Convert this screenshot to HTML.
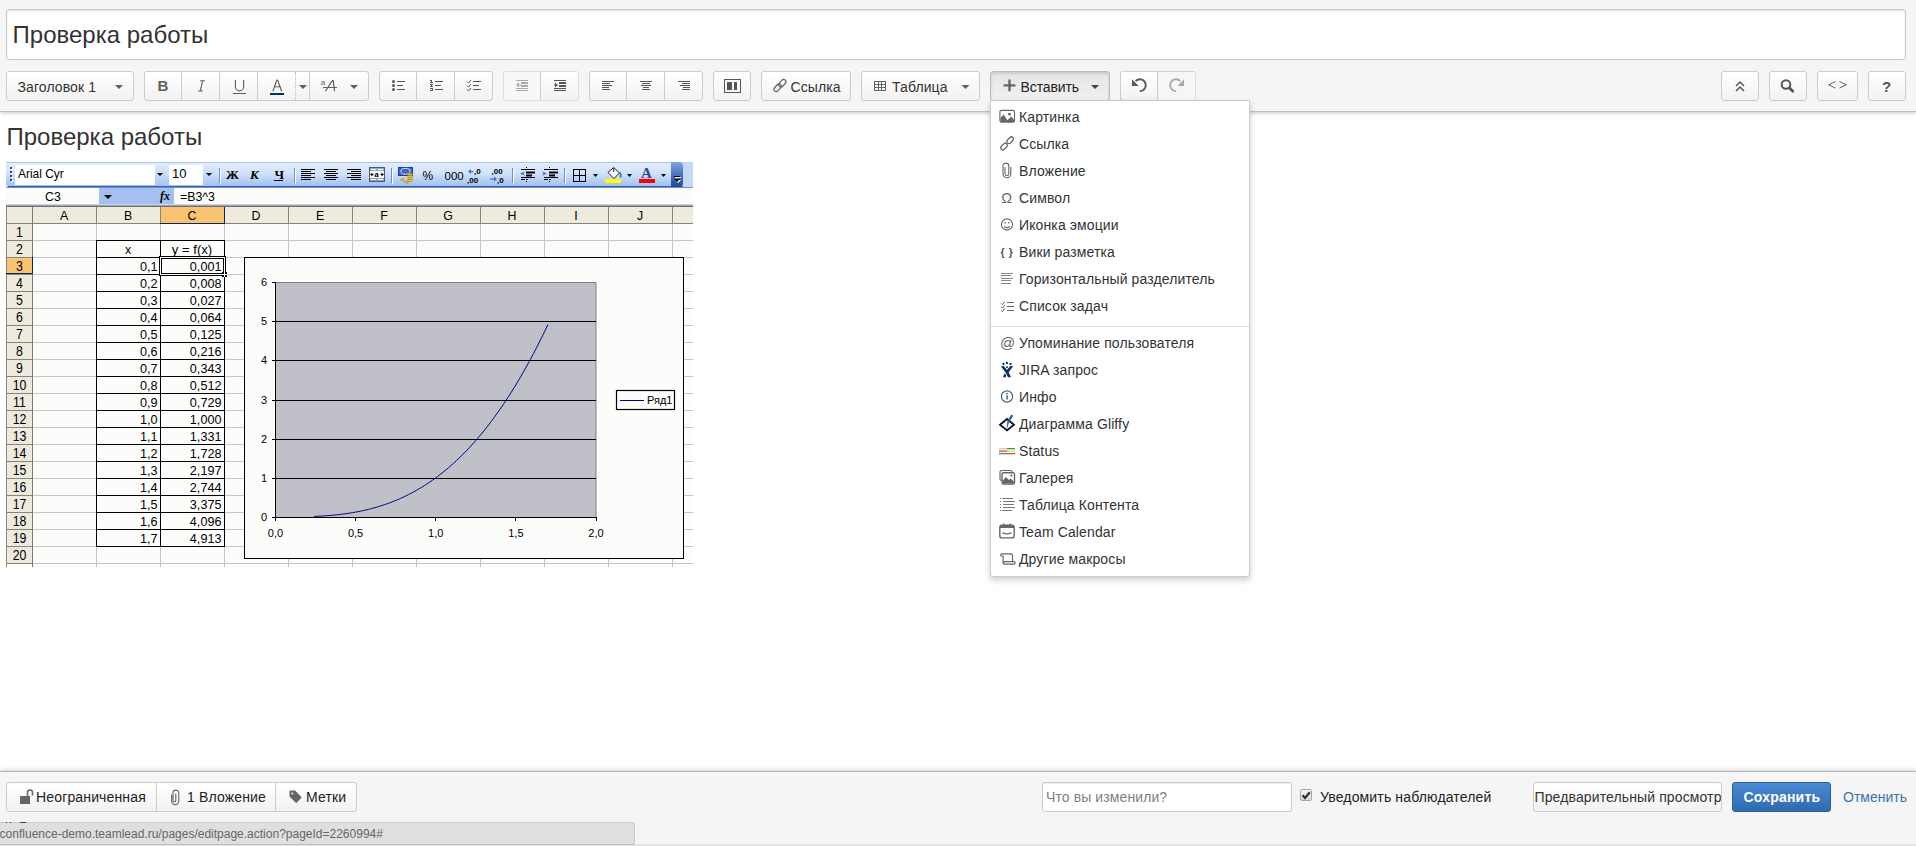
<!DOCTYPE html>
<html><head><meta charset="utf-8">
<style>
*{box-sizing:border-box}
html,body{margin:0;padding:0;width:1916px;height:846px;overflow:hidden;background:#fff;font-family:"Liberation Sans",sans-serif;color:#333}
.abs{position:absolute}
#hdr{position:absolute;left:0;top:0;width:1916px;height:112px;background:#f5f5f5;border-bottom:1px solid #c0c0c0;box-shadow:0 1px 4px rgba(0,0,0,.22)}
#title{position:absolute;left:6px;top:9px;width:1900px;height:51px;background:#fff;border:1px solid #c9c9c9;border-radius:3px;box-shadow:inset 0 1px 2px rgba(0,0,0,.12)}
#title span{position:absolute;left:5.6px;top:11px;font-size:24px;line-height:28px;color:#333}
.grp{position:absolute;top:71px;height:30px;display:flex;border:1px solid #ccc;border-radius:3px;background:linear-gradient(#fff,#f2f2f2);overflow:hidden}
.btn{position:relative;height:28px;border-left:1px solid #ccc;flex:none}
.btn:first-child{border-left:none}
.btn svg{position:absolute;left:0;top:0}
.txt{position:absolute;font-size:14px;line-height:16px;color:#333;white-space:nowrap}
.caret{position:absolute;width:0;height:0;border-left:4px solid transparent;border-right:4px solid transparent;border-top:4px solid #555}
#menu{position:absolute;left:990px;top:100px;width:260px;height:477px;background:#fff;border:1px solid #ccc;border-radius:0 0 3px 3px;box-shadow:0 3px 6px rgba(0,0,0,.2)}
.mi{position:absolute;left:28px;font-size:14px;line-height:16px;color:#333;white-space:nowrap}
.ic{position:absolute;left:9px}
#ftr{position:absolute;left:0;top:771px;width:1916px;height:75px;background:#f5f5f5;border-top:1px solid #b8b8b8;box-shadow:0 -1px 4px rgba(0,0,0,.2)}
</style></head><body>
<div id="hdr">
  <div id="title"><span>Проверка работы</span></div>
</div>

<div class="grp" style="left:6px;width:128px"></div>
<div class="grp" style="left:144px;width:225px"><div class="btn" style="width:36px"></div><div class="btn" style="width:38px"></div><div class="btn" style="width:38px"></div><div class="btn" style="width:38px"></div><div class="btn" style="width:14px;border-left:1px dotted #bbb"></div><div class="btn" style="width:59px"></div></div>
<div class="grp" style="left:379px;width:114px"><div class="btn" style="width:36px"></div><div class="btn" style="width:38px"></div><div class="btn" style="width:38px"></div></div>
<div class="grp" style="left:503px;width:76px;border-color:#ddd"><div class="btn" style="width:36px;background:#f8f8f8"></div><div class="btn" style="width:38px"></div></div>
<div class="grp" style="left:589px;width:114px"><div class="btn" style="width:36px"></div><div class="btn" style="width:38px"></div><div class="btn" style="width:38px"></div></div>
<div class="grp" style="left:713px;width:38px"></div>
<div class="grp" style="left:761px;width:90px"></div>
<div class="grp" style="left:861px;width:119px"></div>
<div class="grp" style="left:990px;width:120px;background:linear-gradient(#e6e6e6,#f0f0f0);border-color:#bbb;box-shadow:inset 0 2px 3px rgba(0,0,0,.12)"></div>
<div class="grp" style="left:1120px;width:76px;border-right-color:#ddd;border-top-color:#d4d4d4"><div class="btn" style="width:36px;border-top:none"></div><div class="btn" style="width:38px;background:#f6f6f6"></div></div>
<div class="grp" style="left:1721px;width:38px"></div>
<div class="grp" style="left:1769px;width:38px"></div>
<div class="grp" style="left:1817px;width:41px"></div>
<div class="grp" style="left:1868px;width:38px"></div>
<svg class="abs" style="left:0;top:0" width="1916" height="120" viewBox="0 0 1916 120">
<g font-family="Liberation Sans" fill="#333" letter-spacing="0.1">
<text x="17.5" y="92" font-size="14">Заголовок 1</text>
<text x="790.5" y="92" font-size="14">Ссылка</text>
<text x="892" y="92" font-size="14">Таблица</text>
<text x="1020.5" y="92" font-size="14" letter-spacing="-0.1" fill="#222">Вставить</text>
</g>
<g fill="#606060">
<path d="M115 85h8l-4 4z"/><path d="M299 85h8l-4 4z"/><path d="M350 85h8l-4 4z"/><path d="M961.5 85h8l-4 4z"/><path d="M1091 85h8l-4 4z" fill="#444"/>
<text x="157.5" y="91" font-size="15" font-weight="bold" font-family="Liberation Sans">B</text>
<path d="M200.2 80.3h4.8v1h-4.8zM198 90.6h4.8v1h-4.8zM202 80.8l1.15.2-2.3 10.2-1.15-.2z"/>
<path d="M235.4 80v6.8a4.1 4.1 0 0 0 8.2 0V80" fill="none" stroke="#666" stroke-width="1.2"/>
<rect x="233" y="93" width="13" height="1"/>
<path d="M272.9 91.2l3.8-10.9h1.1l3.8 10.9" fill="none" stroke="#5e5e5e" stroke-width="1.15"/><rect x="274.4" y="86.3" width="5.8" height="1"/>
<text x="320.8" y="84.5" font-size="8" font-family="Liberation Sans">a</text>
<path d="M325.4 91.2l7-10.6h.9l1.2 10.6" fill="none" stroke="#5e5e5e" stroke-width="1.15"/>
<rect x="323" y="87" width="14" height="1"/>
</g>
<rect x="270" y="93" width="14" height="2" fill="#003366"/>
<!-- lists -->
<g fill="#555">
<circle cx="393.5" cy="81.5" r="1.5"/><circle cx="393.5" cy="85.5" r="1.5"/><circle cx="393.5" cy="89.5" r="1.5"/>
<rect x="397" y="81" width="8" height="1"/><rect x="397" y="85" width="6" height="1"/><rect x="397" y="89" width="8" height="1"/>
<rect x="430" y="80" width="2" height="1"/><rect x="431" y="80" width="1" height="3"/><rect x="430" y="82" width="3" height="1"/>
<rect x="430" y="84" width="3" height="1"/><rect x="431" y="85" width="1" height="1"/><rect x="430" y="86" width="3" height="1"/>
<rect x="430" y="88" width="3" height="1"/><rect x="432" y="89" width="1" height="1"/><rect x="430" y="90" width="3" height="1"/>
<rect x="435" y="81" width="8" height="1"/><rect x="435" y="85" width="6" height="1"/><rect x="435" y="89" width="8" height="1"/>
<path d="M467 81.5l1.5 1.5 2.5-3M467 85.5l1.5 1.5 2.5-3M467 89.5l1.5 1.5 2.5-3" stroke="#555" stroke-width="1" fill="none"/>
<rect x="473" y="81" width="8" height="1"/><rect x="473" y="85" width="6" height="1"/><rect x="473" y="89" width="8" height="1"/>
</g>
<g fill="#aaa">
<rect x="516" y="80" width="12" height="1"/><rect x="521" y="82" width="7" height="2"/><rect x="521" y="85" width="7" height="2"/><rect x="516" y="88" width="12" height="1"/><rect x="516" y="90" width="12" height="1"/>
<path d="M516 85l3-2.5v5z"/><rect x="518" y="84.5" width="3" height="1"/>
</g>
<g fill="#555">
<rect x="554" y="80" width="12" height="1"/><rect x="559" y="82" width="7" height="2"/><rect x="559" y="85" width="7" height="2"/><rect x="554" y="88" width="12" height="1"/><rect x="554" y="90" width="12" height="1"/>
<path d="M558 85l-3-2.5v5z"/><rect x="554" y="84.5" width="3" height="1"/>
</g>
<g fill="#555">
<rect x="602" y="81" width="12" height="1"/><rect x="602" y="83" width="8" height="1"/><rect x="602" y="85" width="10" height="1"/><rect x="602" y="87" width="7" height="1"/><rect x="602" y="89" width="8" height="1"/>
<rect x="640" y="81" width="12" height="1"/><rect x="642" y="83" width="8" height="1"/><rect x="641" y="85" width="10" height="1"/><rect x="643" y="87" width="6" height="1"/><rect x="642" y="89" width="8" height="1"/>
<rect x="678" y="81" width="12" height="1"/><rect x="682" y="83" width="8" height="1"/><rect x="680" y="85" width="10" height="1"/><rect x="683" y="87" width="7" height="1"/><rect x="682" y="89" width="8" height="1"/>
<path d="M724 79h17v14h-17zM725 80v12h15v-12z" fill-rule="evenodd"/>
<rect x="727" y="82" width="5" height="8"/><rect x="734" y="82" width="3" height="8"/>
</g>
<!-- link icon -->
<g stroke="#666" stroke-width="1.3" fill="none">
<rect x="-4.3" y="-2.3" width="8.6" height="4.6" rx="2.3" transform="translate(782.3 83.2) rotate(-48)"/>
<rect x="-4.3" y="-2.3" width="8.6" height="4.6" rx="2.3" transform="translate(777.6 87.8) rotate(-48)"/>
</g>
<!-- table icon -->
<g fill="#666"><rect x="874" y="81" width="12" height="1"/><rect x="874" y="84" width="12" height="1"/><rect x="874" y="87" width="12" height="1"/><rect x="874" y="90" width="12" height="1"/>
<rect x="874" y="81" width="1" height="10"/><rect x="878" y="81" width="1" height="10"/><rect x="881" y="81" width="1" height="10"/><rect x="885" y="81" width="1" height="10"/></g>
<!-- plus -->
<path d="M1004.6 85.4h9.8M1009.5 80.5v9.8" stroke="#666" stroke-width="2.4" stroke-linecap="round" fill="none"/>
<!-- undo/redo -->
<path d="M1135.6 81.1A5.9 5.9 0 1 1 1139.8 91.1" stroke="#5a5a5a" stroke-width="1.9" fill="none"/>
<path d="M1132 79.3v6.8h6.6z" fill="#5a5a5a"/>
<path d="M1180.3 81.1A5.9 5.9 0 1 0 1176.1 91.1" stroke="#aaa" stroke-width="1.9" fill="none"/>
<path d="M1184 79.3v6.8h-6.6z" fill="#aaa"/>
<!-- right buttons -->
<g stroke="#555" stroke-width="1.5" fill="none"><path d="M1736 86l4-4 4 4M1736 91l4-4 4 4"/></g>
<g stroke="#555" stroke-width="2" fill="none"><circle cx="1786" cy="84.5" r="4.3"/><path d="M1789 87.5l4.5 4.5" stroke-width="2.8"/></g>
<g stroke="#555" stroke-width="0.95" fill="none"><path d="M1835.5 81.5l-6.8 3.3 6.8 3.3M1839.5 81.5l6.8 3.3-6.8 3.3"/></g>
<text x="1882" y="92" font-size="15" font-weight="bold" font-family="Liberation Sans" fill="#555">?</text>
</svg>

<div class="abs" style="left:6.5px;top:123px;font-size:24px;line-height:28px;color:#333">Проверка работы</div>
<!--XL--><svg class="abs" style="left:0;top:0" width="700" height="570" viewBox="0 0 700 570"><rect x="6" y="162" width="687" height="405" fill="#fcfdfa"/><defs><linearGradient id="tb" x1="0" y1="0" x2="0" y2="1"><stop offset="0" stop-color="#e3eefd"/><stop offset=".45" stop-color="#d2e2fa"/><stop offset="1" stop-color="#9fbef0"/></linearGradient><linearGradient id="tbe" x1="0" y1="0" x2="0" y2="1"><stop offset="0" stop-color="#7aa3e6"/><stop offset="1" stop-color="#1f4695"/></linearGradient><linearGradient id="dd" x1="0" y1="0" x2="0" y2="1"><stop offset="0" stop-color="#dde9fb"/><stop offset="1" stop-color="#a9c6f2"/></linearGradient><pattern id="dots" width="4" height="4" patternUnits="userSpaceOnUse"><rect width="4" height="4" fill="#ece9dc"/><rect x="1" y="1" width="1" height="1" fill="#fbfaf4"/><rect x="3" y="3" width="1" height="1" fill="#f6f4ec"/></pattern><pattern id="odots" width="4" height="4" patternUnits="userSpaceOnUse"><rect width="4" height="4" fill="#f9c572"/><rect x="1" y="1" width="1" height="1" fill="#f7b25a"/></pattern><pattern id="pdots" width="2" height="2" patternUnits="userSpaceOnUse"><rect width="2" height="2" fill="#c3c2c5"/><rect x="1" y="0" width="1" height="1" fill="#b3b8d0"/></pattern></defs><rect x="683" y="162" width="10" height="25" fill="#c4d8f8"/><rect x="6" y="162" width="677" height="25" rx="3" fill="url(#tb)"/><rect x="6" y="162" width="677" height="1" fill="#a9c7f3"/><rect x="8" y="186" width="675" height="1" fill="#3b62a6"/><rect x="6" y="187" width="687" height="1" fill="#6d8fd0"/><path d="M671 162h8a4 4 0 0 1 4 4v17a4 4 0 0 1-4 4h-8z" fill="url(#tbe)"/><g fill="#fff"><rect x="675" y="177" width="6" height="1"/><path d="M675 180h6l-3 3z"/></g><g fill="#000"><rect x="674" y="176" width="6" height="1"/><path d="M674 179h6l-3 3z"/></g><rect x="11" y="168" width="2" height="2" fill="#fff"/><rect x="10" y="167" width="2" height="2" fill="#274a8a"/><rect x="11" y="172" width="2" height="2" fill="#fff"/><rect x="10" y="171" width="2" height="2" fill="#274a8a"/><rect x="11" y="176" width="2" height="2" fill="#fff"/><rect x="10" y="175" width="2" height="2" fill="#274a8a"/><rect x="11" y="180" width="2" height="2" fill="#fff"/><rect x="10" y="179" width="2" height="2" fill="#274a8a"/><rect x="15" y="165" width="151" height="20" fill="#fff"/><rect x="155" y="165" width="11" height="20" fill="url(#dd)"/><path d="M157 173h6l-3 3z" fill="#000"/><rect x="169" y="165" width="46" height="20" fill="#fff"/><rect x="203" y="165" width="12" height="20" fill="url(#dd)"/><path d="M206 173h6l-3 3z" fill="#000"/><g font-family="Liberation Sans" font-size="13" fill="#000"><g transform="matrix(.92 0 0 1 1.44 0)"><text x="18" y="178">Arial Cyr</text></g><text x="172" y="178">10</text></g><rect x="219" y="168" width="1" height="15" fill="#6a8ccb"/><rect x="220" y="169" width="1" height="15" fill="#fff"/><rect x="294" y="168" width="1" height="15" fill="#6a8ccb"/><rect x="295" y="169" width="1" height="15" fill="#fff"/><rect x="391" y="168" width="1" height="15" fill="#6a8ccb"/><rect x="392" y="169" width="1" height="15" fill="#fff"/><rect x="512" y="168" width="1" height="15" fill="#6a8ccb"/><rect x="513" y="169" width="1" height="15" fill="#fff"/><rect x="564" y="168" width="1" height="15" fill="#6a8ccb"/><rect x="565" y="169" width="1" height="15" fill="#fff"/><g font-family="Liberation Serif" font-weight="bold" font-size="13" fill="#000"><text x="226" y="179">Ж</text><text x="250" y="179" font-style="italic">К</text><text x="274.5" y="179">Ч</text></g><rect x="274" y="180" width="9" height="1" fill="#000"/><rect x="301" y="169" width="14" height="1" fill="#000"/><rect x="301" y="171" width="10" height="1" fill="#000"/><rect x="301" y="173" width="14" height="1" fill="#000"/><rect x="301" y="175" width="10" height="1" fill="#000"/><rect x="301" y="177" width="14" height="1" fill="#000"/><rect x="301" y="179" width="10" height="1" fill="#000"/><rect x="324" y="169" width="14" height="1" fill="#000"/><rect x="326" y="171" width="10" height="1" fill="#000"/><rect x="324" y="173" width="14" height="1" fill="#000"/><rect x="326" y="175" width="10" height="1" fill="#000"/><rect x="324" y="177" width="14" height="1" fill="#000"/><rect x="326" y="179" width="10" height="1" fill="#000"/><rect x="347" y="169" width="14" height="1" fill="#000"/><rect x="351" y="171" width="10" height="1" fill="#000"/><rect x="347" y="173" width="14" height="1" fill="#000"/><rect x="351" y="175" width="10" height="1" fill="#000"/><rect x="347" y="177" width="14" height="1" fill="#000"/><rect x="351" y="179" width="10" height="1" fill="#000"/><rect x="369.5" y="167.5" width="15" height="14" fill="#fff" stroke="#4a5a78" stroke-width="1"/><rect x="370" y="168" width="14" height="3" fill="#8fa6c8"/><rect x="370" y="178" width="14" height="3" fill="#8fa6c8"/><rect x="371" y="169" width="5" height="1" fill="#fff"/><rect x="378" y="169" width="5" height="1" fill="#fff"/><rect x="371" y="179" width="5" height="1" fill="#fff"/><rect x="378" y="179" width="5" height="1" fill="#fff"/><text x="374.2" y="177" font-family="Liberation Serif" font-size="9" font-weight="bold" fill="#000">a</text><path d="M370 174.5l2.5-2v4zM384 174.5l-2.5-2v4z" fill="#000"/><rect x="371" y="174" width="2.5" height="1" fill="#000"/><rect x="380.5" y="174" width="2.5" height="1" fill="#000"/><rect x="398" y="167" width="15" height="9" fill="#3e67c0"/><rect x="398.5" y="167.5" width="14" height="8" fill="none" stroke="#203f90"/><ellipse cx="405.5" cy="171.3" rx="4.5" ry="3" fill="none" stroke="#dfe8f8" stroke-width="1"/><g fill="#f0c030" stroke="#a87810" stroke-width=".5"><ellipse cx="410" cy="174.5" rx="2.8" ry="1.1"/><ellipse cx="410" cy="176.5" rx="2.8" ry="1.1"/><ellipse cx="410" cy="178.5" rx="2.8" ry="1.1"/><ellipse cx="410" cy="180.5" rx="2.8" ry="1.1"/><path d="M400 179.5l4-1.5v3z"/><path d="M404 182l4-1.5v3z"/></g><g font-family="Liberation Sans" font-size="12" fill="#000"><text x="422.5" y="180">%</text><text x="444.5" y="180" font-size="11.5">000</text></g><g font-family="Liberation Sans" font-size="8" font-weight="bold" fill="#000"><text x="474" y="174">,0</text><text x="467" y="182.5">,00</text><text x="491.5" y="173.5">,00</text><text x="497" y="182.5">,0</text></g><g fill="#3d6fc4"><path d="M468 171.5l3-2.5v5z"/><rect x="470" y="171" width="3.5" height="1.2"/><path d="M497 179l-3-2.5v5z"/><rect x="490" y="178.5" width="4" height="1.2"/></g><g fill="#000"><rect x="526" y="167" width="1" height="1"/><rect x="526" y="181" width="1" height="1"/><rect x="521" y="169" width="14" height="1"/><rect x="526" y="171.5" width="9" height="2"/><rect x="526" y="174.5" width="6" height="2"/><rect x="521" y="177" width="14" height="1"/><rect x="521" y="179" width="4" height="1"/><rect x="526" y="179" width="2" height="1"/></g><path d="M525 171.5l-5 2 5 2.3-1.5-2.3z" fill="#3d6fc4"/><g fill="#000"><rect x="549" y="167" width="1" height="1"/><rect x="549" y="181" width="1" height="1"/><rect x="544" y="169" width="14" height="1"/><rect x="549" y="171.5" width="9" height="2"/><rect x="549" y="174.5" width="6" height="2"/><rect x="544" y="177" width="14" height="1"/><rect x="544" y="179" width="4" height="1"/><rect x="549" y="179" width="2" height="1"/></g><path d="M542 171.5l5 2-5 2.3 1.5-2.3z" fill="#3d6fc4"/><path d="M573 169h13v13h-13zM574 170v5h5v-5zM580 170v5h5v-5zM574 176v5h5v-5zM580 176v5h5v-5z" fill="#000" fill-rule="evenodd"/><path d="M593 174h5l-2.5 3z" fill="#000"/><path d="M608 172.5l5.5-5 6 5.5-5.5 5.5z" fill="#f4f6fa" stroke="#222" stroke-width="1"/><rect x="613" y="167" width="1.2" height="5" fill="#555"/><path d="M619.5 172.5q2 1.5 1 5" stroke="#3a6ad0" stroke-width="1.6" fill="none"/><rect x="605" y="179" width="16" height="4" fill="#ffff00"/><path d="M627 174h5l-2.5 3z" fill="#000"/><text x="641" y="178" font-family="Liberation Serif" font-weight="bold" font-size="15" fill="#2d4a8e">A</text><rect x="639" y="179" width="16" height="4" fill="#ff0000"/><path d="M661 174h5l-2.5 3z" fill="#000"/><rect x="6" y="188" width="687" height="17" fill="#fcfdfa"/><rect x="99" y="188" width="75" height="17" fill="#a3c0f0"/><path d="M104 195h8l-4 4z" fill="#000"/><text x="160" y="200" font-family="Liberation Serif" font-style="italic" font-weight="bold" font-size="12" fill="#000">fx</text><g font-family="Liberation Sans" fill="#000"><text x="53" y="201" text-anchor="middle" font-size="13.7" transform="matrix(0.9 0 0 1 5.300 0)">C3</text><text x="180" y="201" text-anchor="start" font-size="13.7" transform="matrix(0.9 0 0 1 18.000 0)">=B3^3</text></g><rect x="6" y="204" width="687" height="1" fill="#c0d4f4"/><rect x="6" y="205" width="687" height="1" fill="#a4a4a4"/><rect x="6" y="206" width="687" height="1" fill="#6e6e6e"/><rect x="6" y="207" width="687" height="16" fill="url(#dots)"/><rect x="6" y="207" width="26" height="356" fill="url(#dots)"/><rect x="160" y="207" width="65" height="16" fill="url(#odots)"/><rect x="6" y="257" width="26" height="17" fill="url(#odots)"/><rect x="33" y="240" width="660" height="1" fill="#c6c6c6"/><rect x="6" y="240" width="26" height="1" fill="#86857a"/><rect x="33" y="257" width="660" height="1" fill="#c6c6c6"/><rect x="6" y="257" width="26" height="1" fill="#86857a"/><rect x="33" y="274" width="660" height="1" fill="#c6c6c6"/><rect x="6" y="274" width="26" height="1" fill="#86857a"/><rect x="33" y="291" width="660" height="1" fill="#c6c6c6"/><rect x="6" y="291" width="26" height="1" fill="#86857a"/><rect x="33" y="308" width="660" height="1" fill="#c6c6c6"/><rect x="6" y="308" width="26" height="1" fill="#86857a"/><rect x="33" y="325" width="660" height="1" fill="#c6c6c6"/><rect x="6" y="325" width="26" height="1" fill="#86857a"/><rect x="33" y="342" width="660" height="1" fill="#c6c6c6"/><rect x="6" y="342" width="26" height="1" fill="#86857a"/><rect x="33" y="359" width="660" height="1" fill="#c6c6c6"/><rect x="6" y="359" width="26" height="1" fill="#86857a"/><rect x="33" y="376" width="660" height="1" fill="#c6c6c6"/><rect x="6" y="376" width="26" height="1" fill="#86857a"/><rect x="33" y="393" width="660" height="1" fill="#c6c6c6"/><rect x="6" y="393" width="26" height="1" fill="#86857a"/><rect x="33" y="410" width="660" height="1" fill="#c6c6c6"/><rect x="6" y="410" width="26" height="1" fill="#86857a"/><rect x="33" y="427" width="660" height="1" fill="#c6c6c6"/><rect x="6" y="427" width="26" height="1" fill="#86857a"/><rect x="33" y="444" width="660" height="1" fill="#c6c6c6"/><rect x="6" y="444" width="26" height="1" fill="#86857a"/><rect x="33" y="461" width="660" height="1" fill="#c6c6c6"/><rect x="6" y="461" width="26" height="1" fill="#86857a"/><rect x="33" y="478" width="660" height="1" fill="#c6c6c6"/><rect x="6" y="478" width="26" height="1" fill="#86857a"/><rect x="33" y="495" width="660" height="1" fill="#c6c6c6"/><rect x="6" y="495" width="26" height="1" fill="#86857a"/><rect x="33" y="512" width="660" height="1" fill="#c6c6c6"/><rect x="6" y="512" width="26" height="1" fill="#86857a"/><rect x="33" y="529" width="660" height="1" fill="#c6c6c6"/><rect x="6" y="529" width="26" height="1" fill="#86857a"/><rect x="33" y="546" width="660" height="1" fill="#c6c6c6"/><rect x="6" y="546" width="26" height="1" fill="#86857a"/><rect x="33" y="563" width="660" height="1" fill="#c6c6c6"/><rect x="6" y="563" width="26" height="1" fill="#86857a"/><rect x="6" y="223" width="687" height="1" fill="#86857a"/><rect x="96" y="224" width="1" height="343" fill="#c6c6c6"/><rect x="96" y="207" width="1" height="16" fill="#86857a"/><rect x="160" y="224" width="1" height="343" fill="#c6c6c6"/><rect x="160" y="207" width="1" height="16" fill="#86857a"/><rect x="224" y="224" width="1" height="343" fill="#c6c6c6"/><rect x="224" y="207" width="1" height="16" fill="#86857a"/><rect x="288" y="224" width="1" height="343" fill="#c6c6c6"/><rect x="288" y="207" width="1" height="16" fill="#86857a"/><rect x="352" y="224" width="1" height="343" fill="#c6c6c6"/><rect x="352" y="207" width="1" height="16" fill="#86857a"/><rect x="416" y="224" width="1" height="343" fill="#c6c6c6"/><rect x="416" y="207" width="1" height="16" fill="#86857a"/><rect x="480" y="224" width="1" height="343" fill="#c6c6c6"/><rect x="480" y="207" width="1" height="16" fill="#86857a"/><rect x="544" y="224" width="1" height="343" fill="#c6c6c6"/><rect x="544" y="207" width="1" height="16" fill="#86857a"/><rect x="608" y="224" width="1" height="343" fill="#c6c6c6"/><rect x="608" y="207" width="1" height="16" fill="#86857a"/><rect x="672" y="224" width="1" height="343" fill="#c6c6c6"/><rect x="672" y="207" width="1" height="16" fill="#86857a"/><rect x="32" y="207" width="1" height="360" fill="#7a796e"/><rect x="6" y="207" width="1" height="360" fill="#86857a"/><rect x="160" y="223" width="65" height="1" fill="#0a246a"/><rect x="224" y="207" width="1" height="17" fill="#0a246a"/><rect x="32" y="257" width="1" height="17" fill="#0a246a"/><rect x="6" y="273" width="27" height="1" fill="#0a246a"/><g font-family="Liberation Sans" font-size="13" fill="#000"><text x="64" y="220" text-anchor="middle" font-size="13.7" transform="matrix(0.9 0 0 1 6.400 0)">A</text><text x="128" y="220" text-anchor="middle" font-size="13.7" transform="matrix(0.9 0 0 1 12.800 0)">B</text><text x="192" y="220" text-anchor="middle" font-size="13.7" transform="matrix(0.9 0 0 1 19.200 0)">C</text><text x="256" y="220" text-anchor="middle" font-size="13.7" transform="matrix(0.9 0 0 1 25.600 0)">D</text><text x="320" y="220" text-anchor="middle" font-size="13.7" transform="matrix(0.9 0 0 1 32.000 0)">E</text><text x="384" y="220" text-anchor="middle" font-size="13.7" transform="matrix(0.9 0 0 1 38.400 0)">F</text><text x="448" y="220" text-anchor="middle" font-size="13.7" transform="matrix(0.9 0 0 1 44.800 0)">G</text><text x="512" y="220" text-anchor="middle" font-size="13.7" transform="matrix(0.9 0 0 1 51.200 0)">H</text><text x="576" y="220" text-anchor="middle" font-size="13.7" transform="matrix(0.9 0 0 1 57.600 0)">I</text><text x="640" y="220" text-anchor="middle" font-size="13.7" transform="matrix(0.9 0 0 1 64.000 0)">J</text><text x="19.5" y="237" text-anchor="middle" font-size="14" transform="matrix(0.88 0 0 1 2.340 0)">1</text><text x="19.5" y="254" text-anchor="middle" font-size="14" transform="matrix(0.88 0 0 1 2.340 0)">2</text><text x="19.5" y="271" text-anchor="middle" font-size="14" transform="matrix(0.88 0 0 1 2.340 0)">3</text><text x="19.5" y="288" text-anchor="middle" font-size="14" transform="matrix(0.88 0 0 1 2.340 0)">4</text><text x="19.5" y="305" text-anchor="middle" font-size="14" transform="matrix(0.88 0 0 1 2.340 0)">5</text><text x="19.5" y="322" text-anchor="middle" font-size="14" transform="matrix(0.88 0 0 1 2.340 0)">6</text><text x="19.5" y="339" text-anchor="middle" font-size="14" transform="matrix(0.88 0 0 1 2.340 0)">7</text><text x="19.5" y="356" text-anchor="middle" font-size="14" transform="matrix(0.88 0 0 1 2.340 0)">8</text><text x="19.5" y="373" text-anchor="middle" font-size="14" transform="matrix(0.88 0 0 1 2.340 0)">9</text><text x="19.5" y="390" text-anchor="middle" font-size="14" transform="matrix(0.88 0 0 1 2.340 0)">10</text><text x="19.5" y="407" text-anchor="middle" font-size="14" transform="matrix(0.88 0 0 1 2.340 0)">11</text><text x="19.5" y="424" text-anchor="middle" font-size="14" transform="matrix(0.88 0 0 1 2.340 0)">12</text><text x="19.5" y="441" text-anchor="middle" font-size="14" transform="matrix(0.88 0 0 1 2.340 0)">13</text><text x="19.5" y="458" text-anchor="middle" font-size="14" transform="matrix(0.88 0 0 1 2.340 0)">14</text><text x="19.5" y="475" text-anchor="middle" font-size="14" transform="matrix(0.88 0 0 1 2.340 0)">15</text><text x="19.5" y="492" text-anchor="middle" font-size="14" transform="matrix(0.88 0 0 1 2.340 0)">16</text><text x="19.5" y="509" text-anchor="middle" font-size="14" transform="matrix(0.88 0 0 1 2.340 0)">17</text><text x="19.5" y="526" text-anchor="middle" font-size="14" transform="matrix(0.88 0 0 1 2.340 0)">18</text><text x="19.5" y="543" text-anchor="middle" font-size="14" transform="matrix(0.88 0 0 1 2.340 0)">19</text><text x="19.5" y="560" text-anchor="middle" font-size="14" transform="matrix(0.88 0 0 1 2.340 0)">20</text></g><rect x="96" y="240" width="129" height="1" fill="#000"/><rect x="96" y="257" width="129" height="1" fill="#000"/><rect x="96" y="274" width="129" height="1" fill="#000"/><rect x="96" y="291" width="129" height="1" fill="#000"/><rect x="96" y="308" width="129" height="1" fill="#000"/><rect x="96" y="325" width="129" height="1" fill="#000"/><rect x="96" y="342" width="129" height="1" fill="#000"/><rect x="96" y="359" width="129" height="1" fill="#000"/><rect x="96" y="376" width="129" height="1" fill="#000"/><rect x="96" y="393" width="129" height="1" fill="#000"/><rect x="96" y="410" width="129" height="1" fill="#000"/><rect x="96" y="427" width="129" height="1" fill="#000"/><rect x="96" y="444" width="129" height="1" fill="#000"/><rect x="96" y="461" width="129" height="1" fill="#000"/><rect x="96" y="478" width="129" height="1" fill="#000"/><rect x="96" y="495" width="129" height="1" fill="#000"/><rect x="96" y="512" width="129" height="1" fill="#000"/><rect x="96" y="529" width="129" height="1" fill="#000"/><rect x="96" y="546" width="129" height="1" fill="#000"/><rect x="96" y="240" width="1" height="307" fill="#000"/><rect x="160" y="240" width="1" height="307" fill="#000"/><rect x="224" y="240" width="1" height="307" fill="#000"/><rect x="96" y="546" width="129" height="1" fill="#000"/><g font-family="Liberation Sans" font-size="13" fill="#000"><text x="128" y="254" text-anchor="middle" font-size="13.7" transform="matrix(0.9 0 0 1 12.800 0)">x</text><text x="192" y="254" text-anchor="middle" font-size="13.5" transform="matrix(0.97 0 0 1 5.760 0)">y = f(x)</text></g><rect x="159" y="256" width="67" height="20" fill="#000"/><rect x="160" y="257" width="65" height="18" fill="#fff"/><rect x="161" y="258" width="63" height="16" fill="#000"/><rect x="162" y="259" width="61" height="14" fill="#fcfdfa"/><rect x="222" y="272" width="5" height="5" fill="#000"/><rect x="224" y="272" width="1" height="5" fill="#fff"/><rect x="222" y="274" width="5" height="1" fill="#fff"/><g font-family="Liberation Sans" font-size="13.6" fill="#000"><g transform="matrix(0.93 0 0 1 11.025 0)"><text x="157.5" y="271" text-anchor="end">0,1</text><text x="157.5" y="288" text-anchor="end">0,2</text><text x="157.5" y="305" text-anchor="end">0,3</text><text x="157.5" y="322" text-anchor="end">0,4</text><text x="157.5" y="339" text-anchor="end">0,5</text><text x="157.5" y="356" text-anchor="end">0,6</text><text x="157.5" y="373" text-anchor="end">0,7</text><text x="157.5" y="390" text-anchor="end">0,8</text><text x="157.5" y="407" text-anchor="end">0,9</text><text x="157.5" y="424" text-anchor="end">1,0</text><text x="157.5" y="441" text-anchor="end">1,1</text><text x="157.5" y="458" text-anchor="end">1,2</text><text x="157.5" y="475" text-anchor="end">1,3</text><text x="157.5" y="492" text-anchor="end">1,4</text><text x="157.5" y="509" text-anchor="end">1,5</text><text x="157.5" y="526" text-anchor="end">1,6</text><text x="157.5" y="543" text-anchor="end">1,7</text></g><g transform="matrix(0.93 0 0 1 15.505 0)"><text x="221.5" y="271" text-anchor="end">0,001</text><text x="221.5" y="288" text-anchor="end">0,008</text><text x="221.5" y="305" text-anchor="end">0,027</text><text x="221.5" y="322" text-anchor="end">0,064</text><text x="221.5" y="339" text-anchor="end">0,125</text><text x="221.5" y="356" text-anchor="end">0,216</text><text x="221.5" y="373" text-anchor="end">0,343</text><text x="221.5" y="390" text-anchor="end">0,512</text><text x="221.5" y="407" text-anchor="end">0,729</text><text x="221.5" y="424" text-anchor="end">1,000</text><text x="221.5" y="441" text-anchor="end">1,331</text><text x="221.5" y="458" text-anchor="end">1,728</text><text x="221.5" y="475" text-anchor="end">2,197</text><text x="221.5" y="492" text-anchor="end">2,744</text><text x="221.5" y="509" text-anchor="end">3,375</text><text x="221.5" y="526" text-anchor="end">4,096</text><text x="221.5" y="543" text-anchor="end">4,913</text></g></g><rect x="244.5" y="257.5" width="439" height="301" fill="#fcfdfa" stroke="#000" stroke-width="1"/><rect x="275" y="282" width="321" height="235" fill="url(#pdots)"/><path d="M275.5 282.5h320.5v234.5" fill="none" stroke="#808080"/><rect x="275" y="321" width="321" height="1" fill="#000"/><rect x="275" y="360" width="321" height="1" fill="#000"/><rect x="275" y="400" width="321" height="1" fill="#000"/><rect x="275" y="439" width="321" height="1" fill="#000"/><rect x="275" y="478" width="321" height="1" fill="#000"/><rect x="275" y="282" width="1" height="236" fill="#000"/><rect x="275" y="517" width="322" height="1" fill="#000"/><rect x="272" y="282" width="3" height="1" fill="#000"/><rect x="272" y="321" width="3" height="1" fill="#000"/><rect x="272" y="360" width="3" height="1" fill="#000"/><rect x="272" y="400" width="3" height="1" fill="#000"/><rect x="272" y="439" width="3" height="1" fill="#000"/><rect x="272" y="478" width="3" height="1" fill="#000"/><rect x="272" y="517" width="3" height="1" fill="#000"/><rect x="275" y="517" width="1" height="4" fill="#000"/><rect x="355" y="517" width="1" height="4" fill="#000"/><rect x="435" y="517" width="1" height="4" fill="#000"/><rect x="515" y="517" width="1" height="4" fill="#000"/><rect x="596" y="517" width="1" height="4" fill="#000"/><g font-family="Liberation Sans" font-size="11" fill="#000"><text x="267" y="286" text-anchor="end">6</text><text x="267" y="325" text-anchor="end">5</text><text x="267" y="364" text-anchor="end">4</text><text x="267" y="404" text-anchor="end">3</text><text x="267" y="443" text-anchor="end">2</text><text x="267" y="482" text-anchor="end">1</text><text x="267" y="521" text-anchor="end">0</text><text x="275.5" y="537" text-anchor="middle">0,0</text><text x="355.6" y="537" text-anchor="middle">0,5</text><text x="435.75" y="537" text-anchor="middle">1,0</text><text x="515.9" y="537" text-anchor="middle">1,5</text><text x="596" y="537" text-anchor="middle">2,0</text></g><polyline points="313.96,516.46 315.56,516.39 317.17,516.31 318.77,516.23 320.37,516.14 321.97,516.04 323.57,515.94 325.18,515.83 326.78,515.72 328.38,515.59 329.99,515.46 331.59,515.32 333.19,515.17 334.79,515.02 336.39,514.85 338.00,514.68 339.60,514.49 341.20,514.30 342.81,514.10 344.41,513.89 346.01,513.66 347.61,513.43 349.22,513.19 350.82,512.93 352.42,512.67 354.02,512.39 355.62,512.10 357.23,511.80 358.83,511.49 360.43,511.17 362.04,510.83 363.64,510.48 365.24,510.12 366.84,509.75 368.44,509.36 370.05,508.96 371.65,508.54 373.25,508.11 374.86,507.66 376.46,507.21 378.06,506.73 379.66,506.24 381.26,505.74 382.87,505.22 384.47,504.68 386.07,504.13 387.68,503.56 389.28,502.98 390.88,502.38 392.48,501.76 394.08,501.13 395.69,500.48 397.29,499.81 398.89,499.12 400.50,498.41 402.10,497.69 403.70,496.94 405.30,496.18 406.90,495.40 408.51,494.60 410.11,493.78 411.71,492.94 413.31,492.09 414.92,491.21 416.52,490.31 418.12,489.39 419.73,488.45 421.33,487.48 422.93,486.50 424.53,485.49 426.13,484.47 427.74,483.42 429.34,482.34 430.94,481.25 432.54,480.13 434.15,478.99 435.75,477.83 437.35,476.64 438.96,475.43 440.56,474.20 442.16,472.94 443.76,471.66 445.37,470.35 446.97,469.02 448.57,467.66 450.17,466.27 451.77,464.86 453.38,463.43 454.98,461.97 456.58,460.48 458.18,458.97 459.79,457.43 461.39,455.86 462.99,454.26 464.60,452.64 466.20,450.99 467.80,449.31 469.40,447.61 471.00,445.87 472.61,444.11 474.21,442.32 475.81,440.50 477.41,438.65 479.02,436.76 480.62,434.85 482.22,432.91 483.83,430.94 485.43,428.94 487.03,426.91 488.63,424.85 490.24,422.75 491.84,420.63 493.44,418.47 495.04,416.28 496.64,414.06 498.25,411.80 499.85,409.52 501.45,407.20 503.05,404.85 504.66,402.46 506.26,400.04 507.86,397.59 509.47,395.10 511.07,392.58 512.67,390.02 514.27,387.43 515.88,384.80 517.48,382.14 519.08,379.44 520.68,376.71 522.28,373.94 523.89,371.14 525.49,368.29 527.09,365.42 528.70,362.50 530.30,359.55 531.90,356.56 533.50,353.53 535.11,350.47 536.71,347.36 538.31,344.22 539.91,341.04 541.51,337.82 543.12,334.57 544.72,331.27 546.32,327.93 547.92,324.56" fill="none" stroke="#000080" stroke-width="1"/><rect x="616.5" y="390.5" width="58" height="19" fill="#fcfdfa" stroke="#000" stroke-width="1.2"/><rect x="620" y="400" width="24" height="1" fill="#000080"/><text x="647" y="404" font-family="Liberation Sans" font-size="11" fill="#000">Ряд1</text></svg><!--/XL-->

<!--MN--><div id="menu"></div>
<svg class="abs" style="left:0;top:0" width="1916" height="600" viewBox="0 0 1916 600">
<rect x="991" y="326" width="258" height="1" fill="#ddd"/>
<g font-family="Liberation Sans" font-size="14" fill="#333" letter-spacing="0.12"><text x="1019" y="122">Картинка</text><text x="1019" y="149">Ссылка</text><text x="1019" y="176">Вложение</text><text x="1019" y="203">Символ</text><text x="1019" y="230">Иконка эмоции</text><text x="1019" y="257">Вики разметка</text><text x="1019" y="284">Горизонтальный разделитель</text><text x="1019" y="311">Список задач</text><text x="1019" y="348">Упоминание пользователя</text><text x="1019" y="375">JIRA запрос</text><text x="1019" y="402">Инфо</text><text x="1019" y="429">Диаграмма Gliffy</text><text x="1019" y="456">Status</text><text x="1019" y="483">Галерея</text><text x="1019" y="510">Таблица Контента</text><text x="1019" y="537">Team Calendar</text><text x="1019" y="564">Другие макросы</text></g>
<!-- picture -->
<rect x="999.9" y="110.4" width="14.6" height="11.8" rx="1.6" fill="none" stroke="#666" stroke-width="1.15"/>
<path d="M1000.5 122v-4l3-3.4 3.9 5.6 3.8-3.6 3.3 3.8v1.6z" fill="#666"/><circle cx="1009.5" cy="114.2" r="1.4" fill="#666"/>
<!-- link -->
<g stroke="#666" stroke-width="1.3" fill="none">
<rect x="-4.6" y="-2.1" width="7.6" height="4.2" rx="2.1" transform="translate(1004.6 146) rotate(-45)"/>
<rect x="-3" y="-2.1" width="7.6" height="4.2" rx="2.1" transform="translate(1009.6 140.8) rotate(-45)"/>
</g>
<!-- paperclip -->
<path d="M1005 167.5v6.8a1.9 1.9 0 0 0 3.8 0v-7.8a2.9 2.9 0 0 0-5.8 0v7.8a3.9 3.9 0 0 0 7.8 0v-6.8" stroke="#666" stroke-width="1.1" fill="none" transform="translate(0,-0.5)"/>
<text x="1001.3" y="203" font-family="Liberation Sans" font-size="14.5" fill="#666">Ω</text>
<circle cx="1007" cy="224.5" r="5.6" fill="none" stroke="#666" stroke-width="1.1"/>
<path d="M1004.2 226.2a3.1 3.1 0 0 0 5.6 0" fill="none" stroke="#666" stroke-width="1.1"/>
<rect x="1004.6" y="222" width="1.3" height="1.5" fill="#666"/><rect x="1008.1" y="222" width="1.3" height="1.5" fill="#666"/>
<g font-family="Liberation Sans" font-weight="bold" fill="#555" font-size="10.5"><text x="1000.5" y="255.5">{</text><text x="1008.8" y="255.5">}</text></g>
<g fill="#888">
<rect x="1001" y="273" width="12" height="1"/><rect x="1001" y="275" width="10" height="1"/><rect x="1001" y="278" width="12" height="1"/><rect x="1001" y="280" width="10" height="1"/><rect x="1001" y="283" width="10" height="1"/>
</g>
<g stroke="#666" stroke-width="1" fill="none">
<path d="M1001 303.3l1.4 1.4 2.6-3.3M1001 306.8l1.4 1.4 2.6-3.3M1001 310.3l1.4 1.4 2.6-3.3"/>
</g>
<g fill="#666"><rect x="1007" y="302" width="7" height="1"/><rect x="1007" y="306" width="7" height="1"/><rect x="1007" y="310" width="7" height="1"/></g>
<text x="1000" y="347.5" font-family="Liberation Sans" font-size="15" fill="#666">@</text>
<!-- JIRA -->
<g fill="#0b3168">
<circle cx="1003.5" cy="364" r="1.15"/><circle cx="1007" cy="363" r="1.15"/><circle cx="1010.5" cy="364" r="1.15"/><circle cx="1007" cy="367.2" r="1"/>
<path d="M1000.9 366.2L1003.7 366L1007 369.9L1010.3 366L1013.1 366.2L1008.7 372.2L1011 377.2H1008L1006.1 373.2Z"/>
<path d="M1004.6 373.2L1006.1 374.8L1005.9 377.2H1003Z"/>
</g>
<!-- info -->
<circle cx="1007" cy="396.5" r="5.6" fill="none" stroke="#3d6a84" stroke-width="1.2"/>
<rect x="1006.3" y="395.3" width="1.5" height="4.2" fill="#3d6a84"/><rect x="1006.3" y="392.9" width="1.5" height="1.5" fill="#3d6a84"/>
<!-- gliffy -->
<path d="M1007 419l7 5.8-7 5.6-7-5.6z" fill="#f4f4f4" stroke="#111" stroke-width="1.8" stroke-linejoin="miter"/>
<path d="M1006.6 430l.8-9 3.3-5.2 1.8 1.2-3.6 5.4z" fill="#1f5aa8"/><path d="M1010 415.5l2.8-.8 .2 2.6z" fill="#1f5aa8"/>
<!-- status -->
<rect x="999" y="448" width="8" height="1.3" fill="#ccc"/><rect x="1007" y="448" width="8" height="1.3" fill="#3a9a4a"/>
<rect x="999" y="450.3" width="8" height="1.8" fill="#e87060"/><rect x="1007" y="450.3" width="8" height="1.8" fill="#fada80"/>
<rect x="999" y="453" width="8" height="1.3" fill="#5a7ea6"/><rect x="1007" y="453" width="8" height="1.3" fill="#9a7050"/>
<!-- gallery -->
<rect x="1000" y="470.5" width="12" height="10" rx="1.5" fill="none" stroke="#666" stroke-width="1.2"/>
<rect x="1002" y="472.7" width="12.5" height="11.3" rx="1.5" fill="#fff" stroke="#666" stroke-width="1.4"/>
<path d="M1002.8 483.3v-2.7l3.2-3.6 2.8 3 1.8-1.6 3.2 3v1.9z" fill="#666"/><circle cx="1011.3" cy="475.6" r="1.1" fill="#666"/>
<!-- toc -->
<g fill="#777">
<rect x="1000" y="498" width="1" height="1"/><rect x="1002" y="498" width="11" height="1"/>
<rect x="1000" y="501" width="1" height="1"/><rect x="1003" y="501" width="12" height="1"/>
<rect x="1000" y="504" width="1" height="1"/><rect x="1003" y="504" width="11" height="1"/>
<rect x="1000" y="507" width="1" height="1"/><rect x="1003" y="507" width="12" height="1"/>
<rect x="1000" y="510" width="1" height="1"/><rect x="1002" y="510" width="10" height="1"/>
</g>
<!-- calendar -->
<rect x="999.8" y="525.3" width="14.4" height="12.6" rx="2.2" fill="none" stroke="#666" stroke-width="1.4"/>
<rect x="1000" y="525" width="14" height="3" fill="#666"/><rect x="1003" y="523.5" width="1.4" height="2.5" fill="#666"/><rect x="1009.6" y="523.5" width="1.4" height="2.5" fill="#666"/>
<path d="M1002.5 532.6q4.5 2.6 9 0" fill="none" stroke="#666" stroke-width="1.3"/>
<!-- scroll -->
<path d="M1001.8 553.8h8.7a2 2 0 0 1 2 2v6.3M1001.8 553.8a1.1 1.1 0 0 0 0 2.2h1.3v7a1.2 1.2 0 0 0 1.2 1.2h9.5a1.3 1.3 0 0 0 .5-2.5h-9.3a1.3 1.3 0 0 0-1.3 1.3" fill="none" stroke="#666" stroke-width="1.2"/>
</svg><!--/MN-->


<div id="ftr"></div>
<div class="abs" style="left:0;top:844px;width:1916px;height:2px;background:#e4e4e4"></div>
<div class="grp" style="left:6px;top:782px;width:351px"><div class="btn" style="width:149px"></div><div class="btn" style="width:119px"></div><div class="btn" style="width:81px"></div></div>
<div class="abs" style="left:1042px;top:782px;width:250px;height:30px;background:#fff;border:1px solid #ccc;border-radius:2px;box-shadow:inset 0 1px 1px rgba(0,0,0,.08)"></div>
<div class="abs" style="left:1300px;top:789px;width:12px;height:12px;background:linear-gradient(#f6f6f6,#d9d9d9);border:1px solid #a8a8a8;border-radius:2px"></div>
<div class="grp" style="left:1533px;top:782px;width:189px;border-radius:3px"></div>
<div class="abs" style="left:1732px;top:782px;width:99px;height:30px;border:1px solid #2b5d9a;border-radius:3px;background:linear-gradient(#4a8ad5,#2f6aae)"></div>
<div class="abs" style="left:0;top:822px;width:635px;height:23px;background:#dfdfdf;border:1px solid #cdcdcd;border-left:none;border-bottom-color:#bdbdbd;border-radius:0 3px 0 0"></div>
<svg class="abs" style="left:0;top:760px" width="1916" height="86" viewBox="0 760 1916 86">
<g font-family="Liberation Sans" font-size="14" fill="#222" letter-spacing="0.15">
<text x="36" y="802">Неограниченная</text>
<text x="187" y="802">1 Вложение</text>
<text x="306" y="802">Метки</text>
<text x="1320" y="802">Уведомить наблюдателей</text>
</g>
<text x="1046" y="802" font-family="Liberation Sans" font-size="14" fill="#808080" letter-spacing="0.1">Что вы изменили?</text>
<svg x="1534" y="782" width="187" height="30" viewBox="1534 782 187 30"><text x="1534.5" y="802" font-family="Liberation Sans" font-size="14" fill="#333" letter-spacing="0.12">Предварительный просмотр</text></svg>
<text x="1743.5" y="802" font-family="Liberation Sans" font-size="14" font-weight="bold" fill="#fff" letter-spacing="0.2">Сохранить</text>
<text x="1843" y="802" font-family="Liberation Sans" font-size="14" fill="#3b73af">Отменить</text>
<text x="-0.4" y="838" font-family="Liberation Sans" font-size="12" fill="#666">confluence-demo.teamlead.ru/pages/editpage.action?pageId=2260994#</text>
<!-- lock -->
<rect x="20" y="796" width="10" height="8" fill="#666"/>
<path d="M27.5 796v-3.5a2.5 2.5 0 0 1 5 0v3" fill="none" stroke="#666" stroke-width="1.5"/>
<!-- clip -->
<path d="M175.8 793.5v7a1.4 1.4 0 0 1-2.8 0v-7.5a2.9 2.9 0 0 1 5.8 0v8a3.6 3.6 0 0 1-7.2 0v-6.5" stroke="#666" stroke-width="1.1" fill="none"/>
<!-- tag -->
<path d="M289.5 791.5a1 1 0 0 1 1-1h4.5l6.2 6.2a1 1 0 0 1 0 1.4l-4.3 4.3a1 1 0 0 1-1.4 0l-6-6z" fill="#666"/><circle cx="292.3" cy="793.6" r="1" fill="#f5f5f5"/>
<!-- check -->
<path d="M1302.6 795.2l2.4 2.8 4.8-5.8" fill="none" stroke="#333" stroke-width="2.2"/>
<!-- tiny marks above status bar -->
<rect x="6" y="822" width="1" height="1" fill="#333"/><rect x="10" y="822" width="1" height="1" fill="#333"/><rect x="20" y="822" width="6" height="1" fill="#444"/>
</svg>

</body></html>
